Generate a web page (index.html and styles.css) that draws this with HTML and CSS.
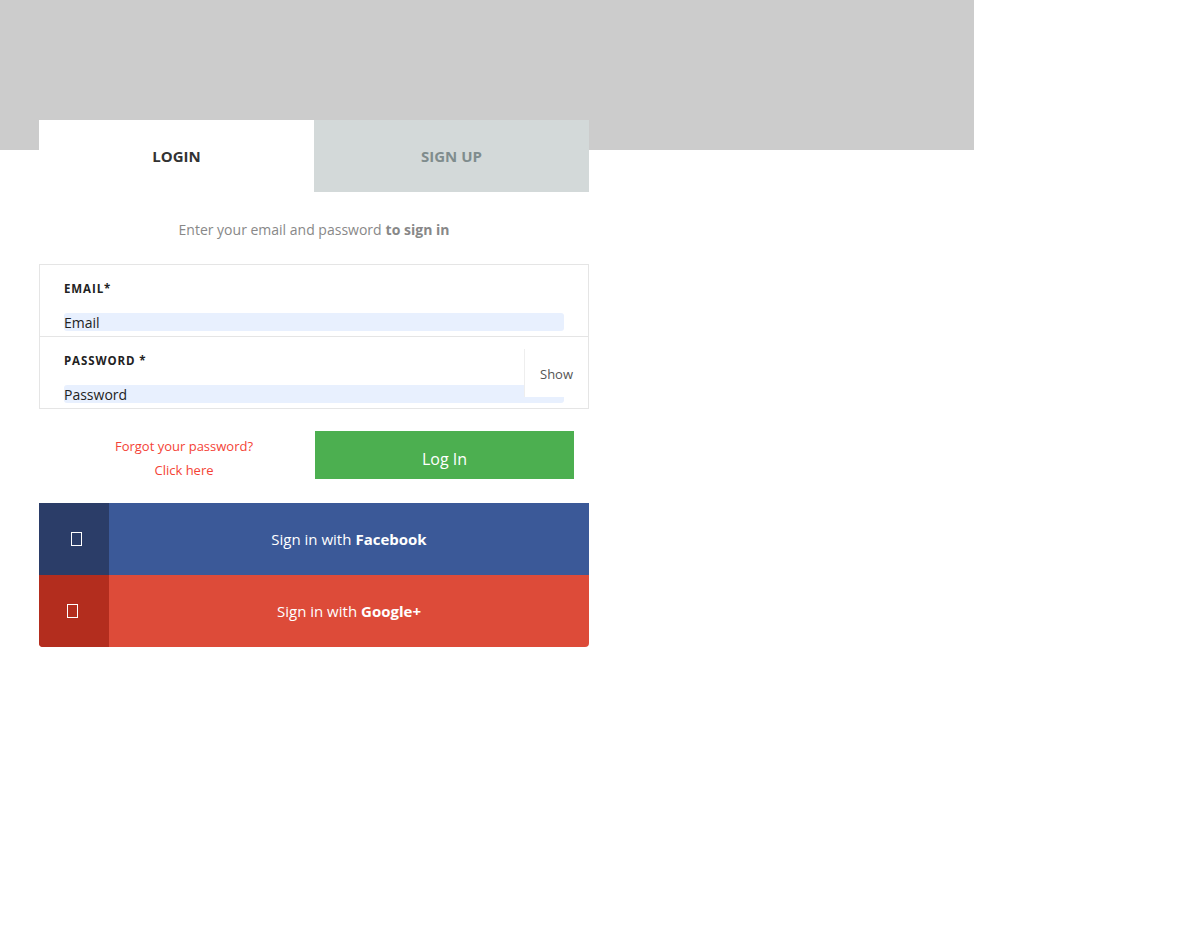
FILE: index.html
```html
<!DOCTYPE html>
<html>
<head>
<meta charset="utf-8">
<link rel="stylesheet" href="styles.css">
</head>
<body>
<div class="hero"></div>
<div class="card">
  <div class="tabs">
    <div class="tab active">LOGIN</div>
    <div class="tab">SIGN UP</div>
  </div>
  <p class="intro">Enter your email and password <b>to sign in</b></p>
  <div class="fields">
    <div class="field">
      <label class="label">EMAIL*</label>
      <div class="input">Email</div>
    </div>
    <div class="field">
      <label class="label">PASSWORD *</label>
      <div class="input">Password</div>
      <div class="show">Show</div>
    </div>
  </div>
  <div class="actions">
    <div class="forgot">Forgot your password?<br>Click here</div>
    <div class="login-btn">Log In</div>
  </div>
  <div class="social fb"><span class="ico"><i class="box"></i></span><span class="txt">Sign in with <b>Facebook</b></span></div>
  <div class="social gp"><span class="ico"><i class="box"></i></span><span class="txt">Sign in with <b>Google+</b></span></div>
</div>
</body>
</html>
```
FILE: styles.css
```css
html, body { margin: 0; padding: 0; background: #fff; }
body { font-family: "Open Sans", "Noto Sans", sans-serif; }
.hero { width: 974px; height: 150px; background: #cccccc; }
.card { width: 550px; margin: -30px 0 0 39px; position: relative; background: #fff; }
.tabs { display: flex; height: 72px; }
.tab { flex: 1; display: flex; align-items: center; justify-content: center; font-weight: 700; font-size: 15px; color: #7f8c8d; background: #d3d9d9; }
.tab.active { background: #fff; color: #333; }
.intro { margin: 0; height: 72px; display: flex; align-items: center; justify-content: center; font-size: 14px; color: #888; padding-top: 2px; box-sizing: border-box; }
.intro b { margin-left: 4px; }
.fields { border: 1px solid #e5e5e5; }
.field { position: relative; height: 71px; padding: 0 24px; }
.field + .field { border-top: 1px solid #e5e5e5; }
.label { display: block; padding-top: 16px; font-size: 11.5px; font-weight: 700; letter-spacing: 0.9px; color: #222; line-height: 16px; }
.input { margin-top: 16px; height: 18px; line-height: 20px; background: #e8f0fe; border-radius: 3px; font-size: 14px; color: #222; }
.show { position: absolute; right: 0; top: 12px; width: 64px; height: 48px; background: #fff; border-left: 1px solid #eee; display: flex; align-items: center; justify-content: center; font-size: 13px; color: #555; padding-top: 2px; box-sizing: border-box; }
.actions { display: flex; align-items: flex-start; padding: 22px 15px 24px 0; }
.forgot { width: 290px; height: 45px; text-align: center; color: #f44336; font-size: 13px; line-height: 24px; padding-top: 3px; }
.login-btn { width: 259px; height: 48px; margin-left: -14px; background: #4caf50; color: #fff; font-size: 16px; display: flex; align-items: center; justify-content: center; padding-top: 8px; box-sizing: border-box; }
.social { display: flex; height: 72px; color: #fff; font-size: 15px; }
.social .ico { width: 70px; display: flex; align-items: center; justify-content: center; box-sizing: border-box; }
.social .txt { flex: 1; display: flex; align-items: center; justify-content: center; }
.social .txt b { margin-left: 4px; }
.box { display: block; width: 9px; height: 12px; border: 1px solid #fff; }
.fb { background: #3b5998; }
.fb .ico { background: #2b3d68; padding-left: 5px; }
.gp { background: #dd4b39; border-radius: 0 0 4px 4px; overflow: hidden; }
.gp .ico { background: #b32d1e; padding-right: 3px; }
```
